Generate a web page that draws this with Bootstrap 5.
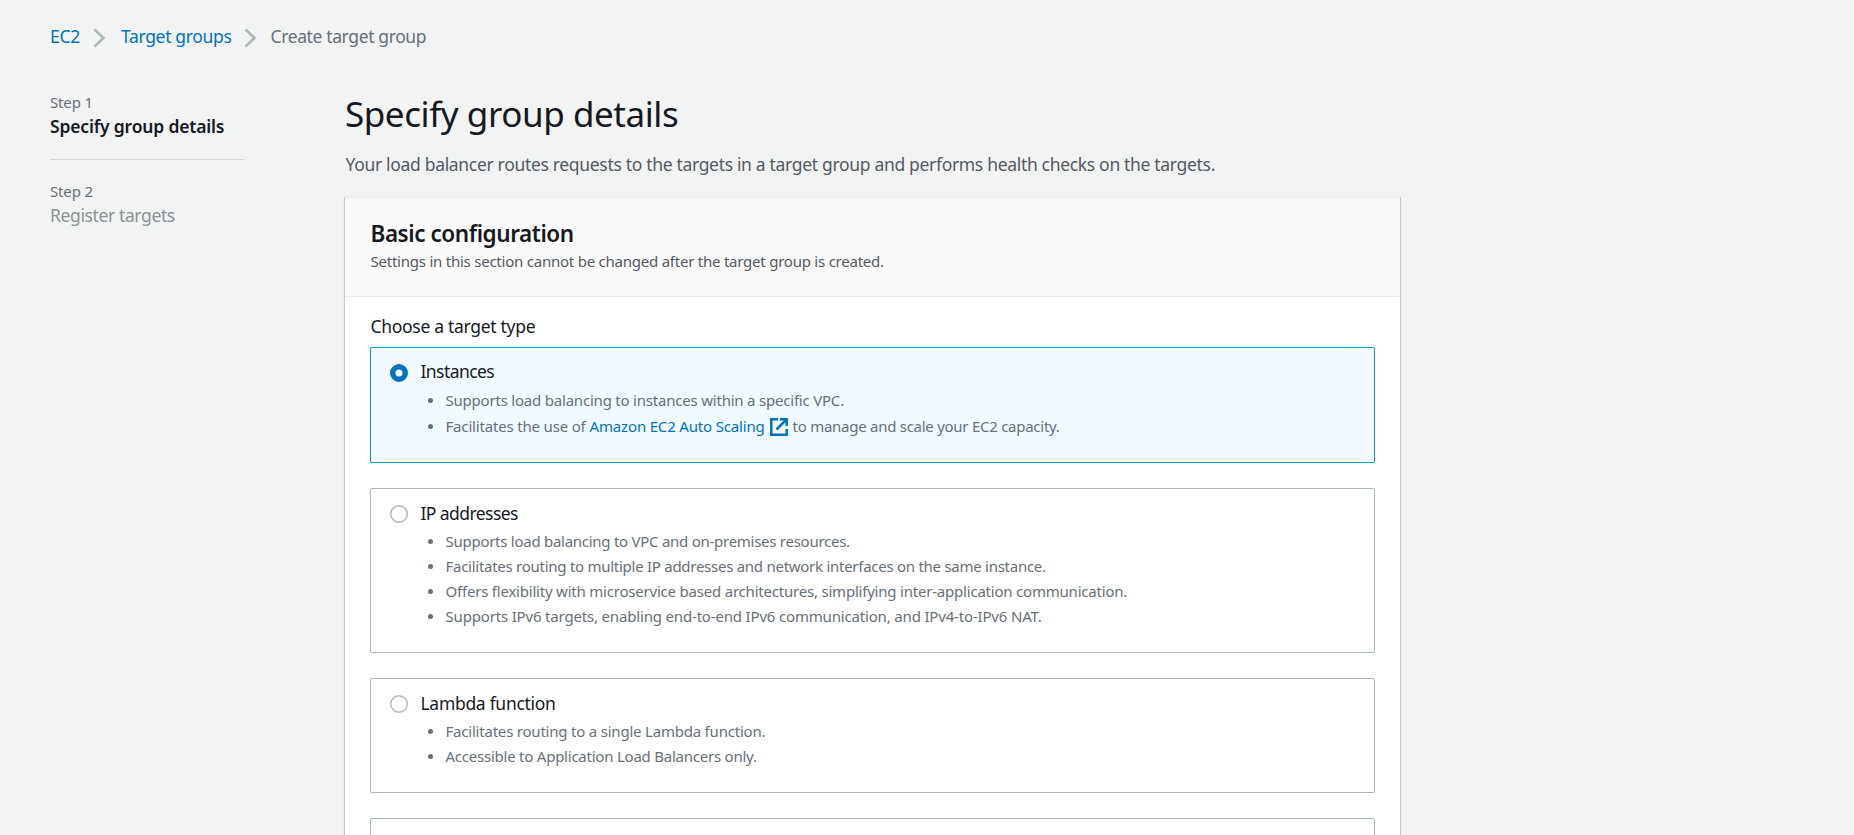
<!DOCTYPE html>
<html lang="en">
<head>
<meta charset="utf-8">
<meta name="viewport" content="width=device-width, initial-scale=1">
<title>Create target group</title>
<link rel="stylesheet" href="https://cdn.jsdelivr.net/npm/bootstrap@5.3.0/dist/css/bootstrap.min.css">
<style>
:root{--ink:#16191f;--muted:#687078;--blue:#0073bb;--line:#aab7b8}
body{background:#f2f3f3;color:var(--ink);font-family:"Noto Sans",sans-serif;font-size:17.5px;line-height:28px;height:835px;overflow:hidden}
a{color:var(--blue);text-decoration:none}
svg{display:block;flex:none}
.crumbs{padding:22px 50px 0;height:92px;white-space:nowrap}
.crumbs .chev{margin:6px 15px 0 13px}
.crumbs .chev + a + .chev{margin:6px 14px 0 12px}
.current{color:var(--muted)}
.steps{width:195px;margin-left:50px}
.step-no{font-size:15px;line-height:20px;color:var(--muted)}
.step-name{line-height:25px;margin-top:2px}
.step-name.later{color:#879596}
.rule{height:1px;background:#d5dbdb;margin:20px 0 21px}
.main-col{width:1057px;margin-left:99px}
h1{font-size:35px;line-height:44px;margin:0;padding-left:1px}
.intro{color:#545b64;margin-top:14px;padding-left:1.5px}
.panel{background:#fff;border:1px solid #c3caca;border-top-color:#eaeded;border-bottom:0;margin-top:19px;height:638px;overflow:hidden;box-shadow:0 0 1px rgba(0,28,36,.15)}
.panel-head{background:#fafafa;border-bottom:1px solid #eaeded;height:99px;padding:22px 25.5px 0}
h2{font-size:22.5px;line-height:28px;margin:0}
.panel-head p{font-size:15px;line-height:20px;color:#545b64;margin:3px 0 0}
.panel-body{padding:15px 25px 0}
.field-label{padding-left:.5px;margin-bottom:7px}
.tile{border:1px solid var(--line);border-radius:2px;padding:10px 19px 23px;margin-bottom:25px}
.tile.active{background:#f1faff;border-color:#00a1c9;padding-top:9px}
.tile .ring{margin:6px 12.5px 0 0}
.tile.active .ring{margin-top:7px}
.tile ul{font-size:15px;line-height:25px;color:var(--muted);list-style:none;padding-left:55.5px;margin:2px 0 0;white-space:nowrap}
.tile.active ul{margin-top:3px}
.tile li{display:flex;align-items:center}
.tile li::before{content:"";width:5px;height:5px;border-radius:50%;background:var(--muted);margin:0 13px 0 -18px}
.tile .linked{height:26px;padding-top:1px}
.ext{margin:0 5px}
.k14{letter-spacing:-.14px}.k17{letter-spacing:-.173px}.k21{letter-spacing:-.209px}.k23{letter-spacing:-.232px}.k27{letter-spacing:-.267px}
.k30{letter-spacing:-.3px}.k32{letter-spacing:-.322px}.k34{letter-spacing:-.337px}.k38{letter-spacing:-.38px}.k43{letter-spacing:-.435px}.k57{letter-spacing:-.57px}
</style>
</head>
<body>
<nav class="crumbs d-flex" aria-label="Breadcrumbs">
  <a href="#" class="k27">EC2</a>
  <svg class="chev" width="13" height="20" viewBox="0 0 13 20"><path d="M1.5 1.5 10.5 10 1.5 18.5" fill="none" stroke="#aab7b8" stroke-width="2.5"/></svg>
  <a href="#" class="k34">Target groups</a>
  <svg class="chev" width="13" height="20" viewBox="0 0 13 20"><path d="M1.5 1.5 10.5 10 1.5 18.5" fill="none" stroke="#aab7b8" stroke-width="2.5"/></svg>
  <span class="k38 current">Create target group</span>
</nav>
<div class="d-flex align-items-start">
  <aside class="steps">
    <div class="step-no k14">Step 1</div>
    <div class="step-name fw-semibold k17">Specify group details</div>
    <div class="rule"></div>
    <div class="step-no k14">Step 2</div>
    <div class="step-name later k38">Register targets</div>
  </aside>
  <main class="main-col">
    <h1 class="fw-normal k43">Specify group details</h1>
    <p class="intro mb-0 k32">Your load balancer routes requests to the targets in a target group and performs health checks on the targets.</p>
    <section class="panel">
      <header class="panel-head">
        <h2 class="fw-semibold k43">Basic configuration</h2>
        <p class="k23">Settings in this section cannot be changed after the target group is created.</p>
      </header>
      <div class="panel-body">
        <div class="field-label k30">Choose a target type</div>
        <div class="tile active">
          <div class="d-flex"><svg class="ring" width="18" height="18"><circle cx="9" cy="9" r="6.25" fill="#fff" stroke="#0073bb" stroke-width="5.5"/></svg><span class="k57">Instances</span></div>
          <ul>
            <li class="k21">Supports load balancing to instances within a specific VPC.</li>
            <li class="linked"><span class="k17">Facilitates the use of</span><a href="#" class="d-flex align-items-center k17 ms-1">Amazon EC2 Auto Scaling
              <svg class="ext" width="18" height="18" viewBox="0 0 18 18"><path d="M8 1.3H1.3V16.7H16.7V11M10 1.3H16.7V8M16.2 1.8 6.5 11.5" fill="none" stroke="#0073bb" stroke-width="2.5"/></svg></a><span class="k27">to manage and scale your EC2 capacity.</span></li>
          </ul>
        </div>
        <div class="tile">
          <div class="d-flex"><svg class="ring" width="18" height="18"><circle cx="9" cy="9" r="8.25" fill="#fff" stroke="#aab7b8" stroke-width="1.4"/></svg><span class="k57">IP addresses</span></div>
          <ul>
            <li class="k27">Supports load balancing to VPC and on-premises resources.</li>
            <li class="k27">Facilitates routing to multiple IP addresses and network interfaces on the same instance.</li>
            <li class="k21">Offers flexibility with microservice based architectures, simplifying inter-application communication.</li>
            <li class="k17">Supports IPv6 targets, enabling end-to-end IPv6 communication, and IPv4-to-IPv6 NAT.</li>
          </ul>
        </div>
        <div class="tile">
          <div class="d-flex"><svg class="ring" width="18" height="18"><circle cx="9" cy="9" r="8.25" fill="#fff" stroke="#aab7b8" stroke-width="1.4"/></svg><span class="k30">Lambda function</span></div>
          <ul>
            <li class="k21">Facilitates routing to a single Lambda function.</li>
            <li class="k23">Accessible to Application Load Balancers only.</li>
          </ul>
        </div>
        <div class="tile"></div>
      </div>
    </section>
  </main>
</div>
<script src="https://cdn.jsdelivr.net/npm/bootstrap@5.3.0/dist/js/bootstrap.bundle.min.js"></script>
</body>
</html>
